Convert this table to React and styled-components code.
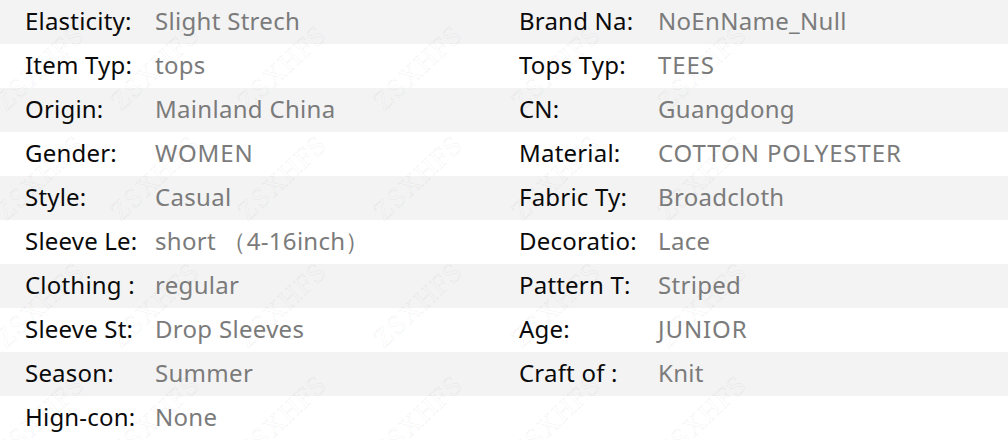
import React from 'react';
import styled, { createGlobalStyle } from 'styled-components';

const GlobalStyle = createGlobalStyle`
  html, body {
    margin: 0;
    padding: 0;
    background: #fff;
  }
  body {
    font-family: "Noto Sans", "Open Sans", sans-serif;
  }
`;

const Sheet = styled.div`
  position: relative;
  width: 1008px;
  height: 440px;
  overflow: hidden;
`;

const Row = styled.div`
  display: grid;
  grid-template-columns: 130px 364px 139px 1fr;
  padding-left: 25px;
  box-sizing: border-box;
  height: 44px;
  padding-bottom: 3px;
  align-items: center;
  background: ${(p) => (p.$shaded ? '#f3f3f3' : '#ffffff')};
  font-size: 24px;
  letter-spacing: 0.2px;
  line-height: 40px;
  white-space: nowrap;
`;

const Label = styled.span`
  color: #0a0a0a;
`;

const Value = styled.span`
  color: #7b7b7b;
  letter-spacing: ${(p) => (p.$caps ? '0.9px' : '0.3px')};
`;

const Watermark = styled.div`
  position: absolute;
  inset: 0;
  pointer-events: none;
  overflow: hidden;
`;

const Stamp = styled.span`
  position: absolute;
  transform: translate(-50%, -50%) rotate(-43deg);
  font-family: "Liberation Serif", serif;
  font-size: 28px;
  letter-spacing: 1px;
  color: transparent;
  -webkit-text-stroke: 0.7px rgba(0, 0, 0, 0.06);
`;

const rows = [
  ['Elasticity:', 'Slight Strech', 'Brand Na:', 'NoEnName_Null'],
  ['Item Typ:', 'tops', 'Tops Typ:', 'TEES'],
  ['Origin:', 'Mainland China', 'CN:', 'Guangdong'],
  ['Gender:', 'WOMEN', 'Material:', 'COTTON POLYESTER'],
  ['Style:', 'Casual', 'Fabric Ty:', 'Broadcloth'],
  ['Sleeve Le:', 'short\u00a0\uff084-16inch\uff09', 'Decoratio:', 'Lace'],
  ['Clothing :', 'regular', 'Pattern T:', 'Striped'],
  ['Sleeve St:', 'Drop Sleeves', 'Age:', 'JUNIOR'],
  ['Season:', 'Summer', 'Craft of :', 'Knit'],
  ['Hign-con:', 'None', '', ''],
];

const isCaps = (s) => s.length > 0 && s === s.toUpperCase();

const stampX = [40, 155, 282, 418, 556, 702];
const stampY = [68, 178, 305, 418];

const App = () => (
  <>
    <GlobalStyle />
    <Sheet>
      {rows.map((r, i) => (
        <Row key={i} $shaded={i % 2 === 0}>
          <Label>{r[0]}</Label>
          <Value $caps={isCaps(r[1])}>{r[1]}</Value>
          <Label>{r[2]}</Label>
          <Value $caps={isCaps(r[3])}>{r[3]}</Value>
        </Row>
      ))}
      <Watermark>
        {stampY.map((y) =>
          stampX.map((x) => (
            <Stamp key={`${x}-${y}`} style={{ left: x, top: y }}>
              ZSXHFS
            </Stamp>
          ))
        )}
      </Watermark>
    </Sheet>
  </>
);

export default App;
